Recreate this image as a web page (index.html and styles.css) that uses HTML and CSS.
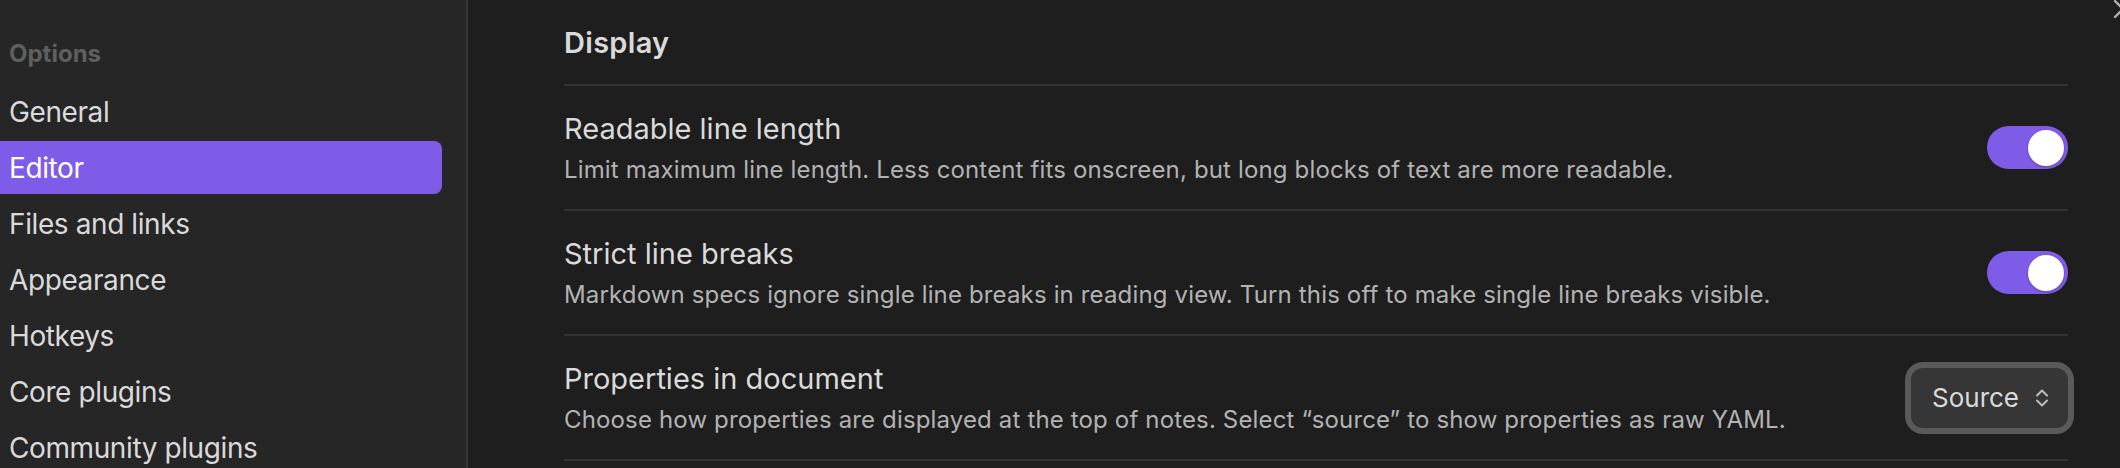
FILE: index.html
```html
<!DOCTYPE html>
<html lang="en">
<head>
<meta charset="utf-8">
<title>Settings – Editor</title>
<link rel="stylesheet" href="styles.css">
</head>
<body>
<div class="modal">
  <nav class="sidebar">
    <div class="nav-heading">Options</div>
    <div class="nav-item">General</div>
    <div class="nav-item is-active">Editor</div>
    <div class="nav-item">Files and links</div>
    <div class="nav-item">Appearance</div>
    <div class="nav-item">Hotkeys</div>
    <div class="nav-item">Core plugins</div>
    <div class="nav-item">Community plugins</div>
  </nav>
  <main class="content">
    <div class="setting-heading">Display</div>
    <div class="setting-item">
      <div class="setting-info">
        <div class="setting-name">Readable line length</div>
        <div class="setting-desc">Limit maximum line length. Less content fits onscreen, but long blocks of text are more readable.</div>
      </div>
      <div class="toggle is-on"><span class="knob"></span></div>
    </div>
    <div class="setting-item">
      <div class="setting-info">
        <div class="setting-name">Strict line breaks</div>
        <div class="setting-desc">Markdown specs ignore single line breaks in reading view. Turn this off to make single line breaks visible.</div>
      </div>
      <div class="toggle is-on"><span class="knob"></span></div>
    </div>
    <div class="setting-item">
      <div class="setting-info">
        <div class="setting-name">Properties in document</div>
        <div class="setting-desc">Choose how properties are displayed at the top of notes. Select “source” to show properties as raw YAML.</div>
      </div>
      <div class="dropdown">
        <span class="dropdown-label">Source</span>
        <svg class="chevrons" width="16" height="20" viewBox="0 0 16 20" fill="none" stroke="currentColor" stroke-width="2" stroke-linecap="round" stroke-linejoin="round"><path d="M3 7.5 L8 2.5 L13 7.5"/><path d="M3 12.5 L8 17.5 L13 12.5"/></svg>
      </div>
    </div>
    <svg class="close" width="24" height="24" viewBox="0 0 24 24" fill="none" stroke="currentColor" stroke-width="2.4" stroke-linecap="round"><path d="M4 4 L20 20"/><path d="M20 4 L4 20"/></svg>
  </main>
</div>
</body>
</html>
```

FILE: styles.css
```css
* { box-sizing: border-box; }

html, body {
  margin: 0;
  padding: 0;
  height: 100%;
  background: #1e1e1e;
  overflow: hidden;
}

body {
  font-family: Inter, "Liberation Sans", sans-serif;
  color: #dadada;
}

.modal {
  display: flex;
  height: 468px;
}

.sidebar {
  width: 468px;
  flex: none;
  background: #262626;
  border-right: 2px solid #363636;
  padding: 0 24px 0 0;
  display: flex;
  flex-direction: column;
  gap: 3px;
  overflow: hidden;
}

.nav-heading {
  height: 82px;
  flex: none;
  padding: 36px 0 0 9px;
  font-size: 24px;
  font-weight: 700;
  line-height: 36px;
  color: #5f5f5f;
}

.nav-item {
  height: 53px;
  flex: none;
  padding-left: 9px;
  display: flex;
  align-items: center;
  font-size: 28px;
  letter-spacing: -0.4px;
  color: #dadada;
  border-radius: 0 8px 8px 0;
}

.nav-item.is-active {
  background: #7f5ce8;
  color: #ffffff;
}

.content {
  position: relative;
  flex: 1;
  padding: 0 52px 0 96px;
  background: #1e1e1e;
}

.setting-heading {
  height: 86px;
  padding-top: 23px;
  border-bottom: 2px solid #333333;
  font-size: 29px;
  font-weight: 600;
  letter-spacing: 0.3px;
  line-height: 40px;
  color: #dadada;
}

.setting-item {
  height: 125px;
  border-bottom: 2px solid #333333;
  display: flex;
  align-items: center;
  justify-content: space-between;
  gap: 40px;
}

.setting-info {
  display: flex;
  flex-direction: column;
  padding-top: 5px;
}

.setting-name {
  font-size: 29px;
  line-height: 40px;
  color: #dadada;
}

.setting-desc {
  font-size: 24px;
  letter-spacing: 0.15px;
  line-height: 42px;
  color: #b3b3b3;
}

.toggle {
  flex: none;
  width: 81px;
  height: 43px;
  border-radius: 22px;
  background: #7f5ce8;
  display: flex;
  align-items: center;
  justify-content: flex-end;
  padding-right: 4px;
}

.knob {
  width: 36px;
  height: 36px;
  border-radius: 50%;
  background: #ffffff;
  box-shadow: 0 1px 3px rgba(0, 0, 0, 0.25);
}

.dropdown {
  flex: none;
  width: 157px;
  height: 60px;
  border-radius: 12px;
  background: #363636;
  box-shadow: 0 0 0 6px #5a5a5a;
  display: flex;
  align-items: center;
  justify-content: space-between;
  padding: 0 18px 0 21px;
  color: #dadada;
}

.dropdown-label {
  font-size: 26px;
  line-height: 32px;
}

.chevrons {
  color: #bdbdbd;
}

.close {
  position: absolute;
  top: -3px;
  right: -15px;
  color: #b0b0b0;
}
```
